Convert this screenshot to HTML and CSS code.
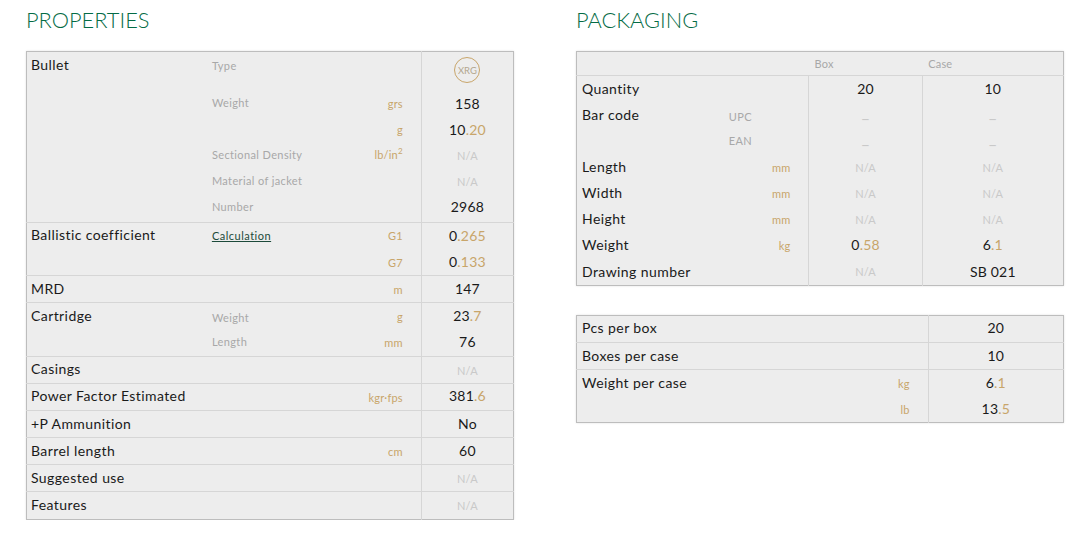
FILE: index.html
```html
<!DOCTYPE html>
<html lang="en">
<head>
<meta charset="utf-8">
<title>Properties and packaging</title>
<link rel="stylesheet" href="styles.css">
</head>
<body>
<main class="page">
  <section class="column">
    <h2 class="title">PROPERTIES</h2>
    <table class="data props">
      <colgroup><col class="p1"><col class="p2"><col class="p3"><col class="p4"></colgroup>
      <tbody>
        <tr class="tall"><th class="top">Bullet</th><td class="sub top-sub">Type</td><td class="unit"></td><td class="val badge-cell"><span class="badge">XRG</span></td></tr>
        <tr><th></th><td class="sub lift">Weight</td><td class="unit">grs</td><td class="val">158</td></tr>
        <tr><th></th><td class="sub"></td><td class="unit">g</td><td class="val">10<span class="dec">.20</span></td></tr>
        <tr><th></th><td class="sub lift">Sectional Density</td><td class="unit lift">lb/in<sup>2</sup></td><td class="val na">N/A</td></tr>
        <tr><th></th><td class="sub lift">Material of jacket</td><td class="unit"></td><td class="val na">N/A</td></tr>
        <tr class="end-28"><th></th><td class="sub lift-more">Number</td><td class="unit"></td><td class="val lift-more">2968</td></tr>
      </tbody>
      <tbody>
        <tr class="first"><th class="higher">Ballistic coefficient</th><td class="sub lift"><a class="calc" href="#">Calculation</a></td><td class="unit lift">G1</td><td class="val">0<span class="dec">.265</span></td></tr>
        <tr><th></th><td class="sub"></td><td class="unit">G7</td><td class="val">0<span class="dec">.133</span></td></tr>
      </tbody>
      <tbody><tr class="first"><th>MRD</th><td class="sub"></td><td class="unit">m</td><td class="val">147</td></tr></tbody>
      <tbody>
        <tr class="first"><th>Cartridge</th><td class="sub drop">Weight</td><td class="unit">g</td><td class="val">23<span class="dec">.7</span></td></tr>
        <tr class="first"><th></th><td class="sub lift-more">Length</td><td class="unit">mm</td><td class="val">76</td></tr>
      </tbody>
      <tbody><tr class="first"><th class="higher">Casings</th><td class="sub"></td><td class="unit"></td><td class="val na">N/A</td></tr></tbody>
      <tbody><tr class="first"><th class="higher" colspan="2">Power Factor Estimated</th><td class="unit">kgr·fps</td><td class="val higher">381<span class="dec">.6</span></td></tr></tbody>
      <tbody><tr class="first"><th>+P Ammunition</th><td class="sub"></td><td class="unit"></td><td class="val">No</td></tr></tbody>
      <tbody><tr class="first"><th>Barrel length</th><td class="sub"></td><td class="unit">cm</td><td class="val">60</td></tr></tbody>
      <tbody><tr class="first"><th>Suggested use</th><td class="sub"></td><td class="unit"></td><td class="val na">N/A</td></tr></tbody>
      <tbody><tr class="end-28"><th>Features</th><td class="sub"></td><td class="unit"></td><td class="val na">N/A</td></tr></tbody>
    </table>
  </section>
  <section class="column">
    <h2 class="title">PACKAGING</h2>
    <table class="data pack">
      <colgroup><col class="k1"><col class="k2"><col class="k3"><col class="k4"><col class="k5"></colgroup>
      <thead><tr><td colspan="3"></td><td class="head">Box</td><td class="head head-case">Case</td></tr></thead>
      <tbody>
        <tr class="first"><th>Quantity</th><td class="sub"></td><td class="unit"></td><td class="val">20</td><td class="val">10</td></tr>
        <tr><th>Bar code</th><td class="sub drop">UPC</td><td class="unit"></td><td class="val na dash">–</td><td class="val na dash">–</td></tr>
        <tr><th></th><td class="sub lift-more">EAN</td><td class="unit"></td><td class="val na dash">–</td><td class="val na dash">–</td></tr>
        <tr><th>Length</th><td class="sub"></td><td class="unit">mm</td><td class="val na">N/A</td><td class="val na">N/A</td></tr>
        <tr><th>Width</th><td class="sub"></td><td class="unit">mm</td><td class="val na">N/A</td><td class="val na">N/A</td></tr>
        <tr><th>Height</th><td class="sub"></td><td class="unit">mm</td><td class="val na">N/A</td><td class="val na">N/A</td></tr>
        <tr><th>Weight</th><td class="sub"></td><td class="unit">kg</td><td class="val">0<span class="dec">.58</span></td><td class="val">6<span class="dec">.1</span></td></tr>
        <tr class="first"><th class="level" colspan="2">Drawing number</th><td class="unit"></td><td class="val na">N/A</td><td class="val level">SB 021</td></tr>
      </tbody>
    </table>
    <table class="data ratio">
      <colgroup><col class="r1"><col class="r2"><col class="r3"></colgroup>
      <tbody><tr class="first"><th class="higher">Pcs per box</th><td class="unit"></td><td class="val higher">20</td></tr></tbody>
      <tbody><tr class="first"><th>Boxes per case</th><td class="unit"></td><td class="val">10</td></tr></tbody>
      <tbody>
        <tr class="first"><th>Weight per case</th><td class="unit">kg</td><td class="val">6<span class="dec">.1</span></td></tr>
        <tr><th></th><td class="unit">lb</td><td class="val">13<span class="dec">.5</span></td></tr>
      </tbody>
    </table>
  </section>
</main>
</body>
</html>
```

FILE: styles.css
```css
* { box-sizing: border-box; }

html, body {
  margin: 0;
  background: #fff;
}

body {
  font-family: "Lato", "Open Sans", sans-serif;
  color: #1a1a1a;
}

.page {
  display: flex;
  gap: 62px;
  padding: 7px 0 0 26px;
}

.column {
  width: 488px;
  flex: none;
}

.title {
  margin: 0 0 18px;
  height: 26px;
  font-size: 21.8px;
  line-height: 26px;
  font-weight: 300;
  color: #046b45;
}

.data {
  width: 488px;
  table-layout: fixed;
  border-collapse: collapse;
  background: #ededed;
  border: 1px solid #bdbdbd;
  box-shadow: 0 0 2px rgba(0, 0, 0, 0.12);
}

.data tbody + tbody,
.data thead + tbody {
  border-top: 1px solid #d6d6d6;
}

.data tr,
.data th,
.data td {
  height: 26px;
}

.data th,
.data td {
  padding: 0;
  vertical-align: middle;
}

.data th {
  padding-left: 4px;
  padding-bottom: 2px;
  text-align: left;
  font-size: 14px;
  font-weight: 400;
  letter-spacing: 0.42px;
  white-space: nowrap;
}

.data .first,
.data .first th,
.data .first td {
  height: 27px;
}

.data .end-28,
.data .end-28 th,
.data .end-28 td {
  height: 28px;
}

.sub {
  font-size: 11px;
  color: #a8a8a8;
  letter-spacing: 0.38px;
  white-space: nowrap;
}

.data .lift { padding-bottom: 2px; }
.data .lift-more { padding-bottom: 3px; }
.data .drop { padding-top: 2px; }

.data .unit {
  padding-right: 18px;
  text-align: right;
  font-size: 11px;
  color: #c8a56a;
  letter-spacing: 0.2px;
}

.unit sup {
  font-size: 8px;
  line-height: 0;
}

.val {
  border-left: 1px solid #d6d6d6;
  text-align: center;
  font-size: 14px;
  letter-spacing: 0.2px;
}

.data tbody + tbody .val:not(.na),
.pack .val:not(.na),
.ratio .val:not(.na) {
  padding-bottom: 2px;
}

.data th.higher,
.data tbody td.val.higher {
  padding-bottom: 4px;
}

.data th.level,
.data tbody td.val.level {
  padding-bottom: 0;
}

.dec {
  color: #c8a56a;
}

.na {
  font-size: 11px;
  color: #c9c9c9;
}

.data .dash {
  font-size: 16px;
  padding-top: 4px;
  color: #c9c9c9;
}

.calc {
  color: #1c4a3a;
  text-decoration: underline;
  letter-spacing: 0.5px;
}

.data .head {
  padding-left: 5.5px;
  font-size: 11px;
  color: #a8a8a8;
  letter-spacing: 0.2px;
}

.data .head-case {
  padding-left: 6px;
}

.pack thead tr,
.pack thead td {
  height: 24px;
}

.data .tall,
.data .tall th,
.data .tall td {
  height: 39px;
}

.data .top {
  vertical-align: top;
  padding-top: 4px;
  padding-bottom: 0;
}

.data .top-sub {
  vertical-align: top;
  padding-top: 7px;
}

.data .badge-cell {
  padding-bottom: 2px;
}

.badge {
  display: inline-flex;
  align-items: center;
  justify-content: center;
  width: 26px;
  height: 26px;
  border: 1px solid #c8a56a;
  border-radius: 50%;
  font-size: 9.5px;
  letter-spacing: 0;
  color: #b3a78f;
}

.p1 { width: 185px; }
.p2 { width: 130px; }
.p3 { width: 79px; }
.p4 { width: 92px; }

.k1 { width: 152px; }
.k2 { width: 30px; }
.k3 { width: 50px; }
.k4 { width: 113px; }
.k5 { width: 141px; }

.r1 { width: 280px; }
.r2 { width: 71px; }
.r3 { width: 135px; }

.data.pack th,
.data.ratio th {
  padding-left: 5px;
}

.ratio {
  margin-top: 29px;
}
```
